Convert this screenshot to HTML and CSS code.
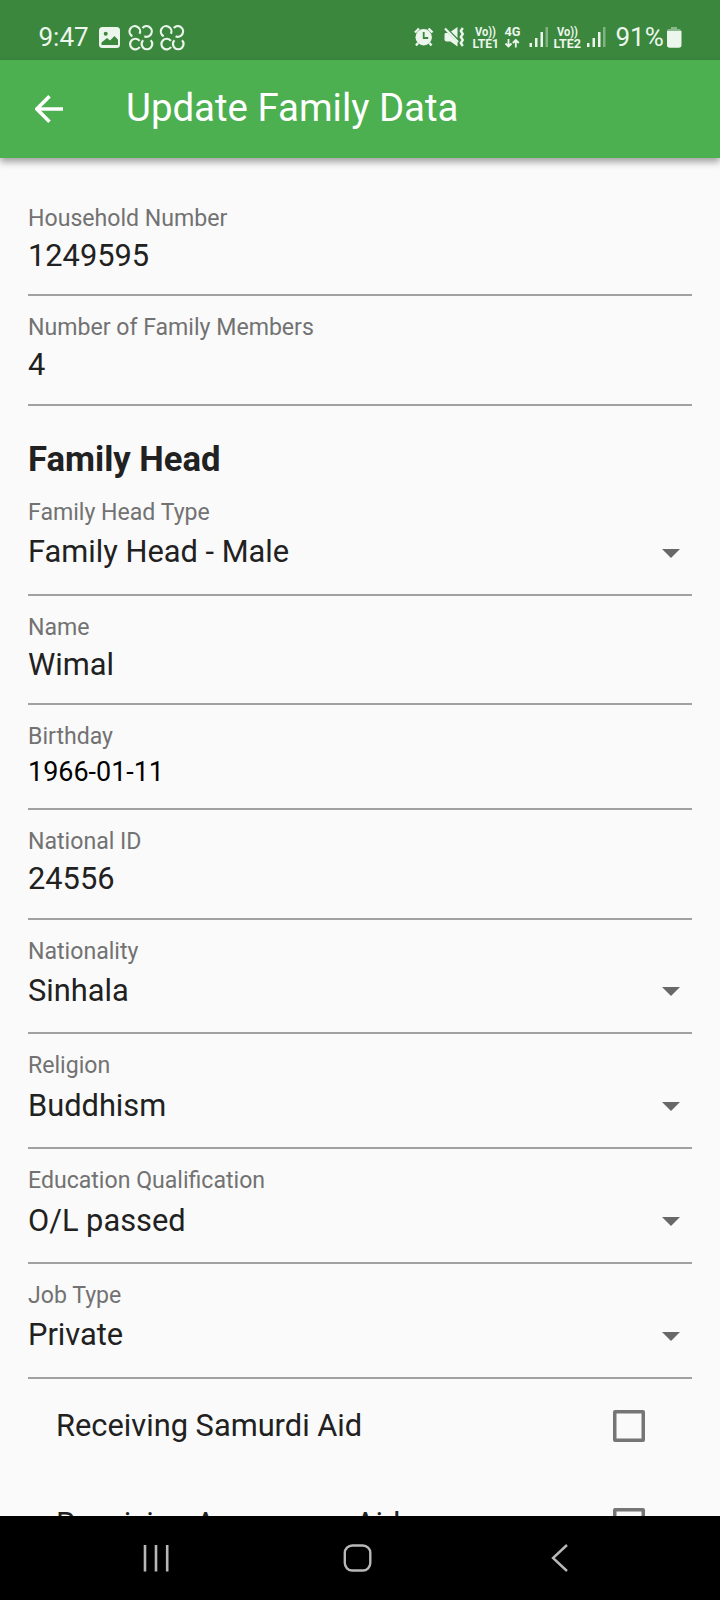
FILE: index.html
```
<!DOCTYPE html>
<html lang="en">
<head>
<meta charset="utf-8">
<title>Update Family Data</title>
<link rel="stylesheet" href="styles.css">
</head>
<body>
<div class="screen">
  <div class="status">
    <span class="clock">9:47</span>
    <svg class="notif" width="90" height="30" viewBox="96 22 90 30">
      <rect x="99" y="27" width="21" height="21" rx="3.5" fill="#ecf6ec"/>
      <circle cx="105.7" cy="33.8" r="2" fill="#3b873e"/>
      <path d="M101.500 45v-2.500l5.500-4.500 3 2.500 4.500-4.500 3.500 3.800V45z" fill="#3b873e"/>
      <g id="clover" fill="none" stroke="#ecf6ec" stroke-width="2.200">
        <path d="M132.400 36.200A5.300 5.300 0 1 1 139.600 33.800M142.500 28A5.300 5.300 0 1 1 144.300 36.300M139.600 40.800A5.300 5.300 0 1 0 139.800 47M143.200 40.200A5.300 5.300 0 1 0 150.700 40.200"/>
      </g>
      <use href="#clover" x="31.300"/>
    </svg>
    <svg class="signals" width="194" height="30" viewBox="412 22 194 30">
      <g fill="#ecf6ec">
        <circle cx="423.700" cy="37.300" r="8.200"/>
        <path d="M415 32.500l4-4M428.500 28.500l4 4M418 43l-2 2.500M429.500 43l2 2.500" stroke="#ecf6ec" stroke-width="2.400"/>
        <path d="M423.700 32v6h4.500" fill="none" stroke="#3b873e" stroke-width="1.800"/>
        <path d="M445 33h3l9.500 9.500v4l-7-5h-4a2 2 0 0 1-2-2v-5z M451 31.500l6.500-4.500v11z"/>
        <path d="M445 28.500l13 13.500" stroke="#ecf6ec" stroke-width="2.200"/>
        <path d="M462.800 28l-2 3 2 3-2 3 2 3-2 3 2 3" fill="none" stroke="#ecf6ec" stroke-width="2.400"/>
        <g class="tiny">
          <text x="475" y="36" textLength="21" lengthAdjust="spacingAndGlyphs">Vo))</text>
          <text x="472.500" y="47.500" textLength="26.500" lengthAdjust="spacingAndGlyphs">LTE1</text>
          <text x="504.500" y="36" textLength="16" lengthAdjust="spacingAndGlyphs">4G</text>
          <text x="557" y="36" textLength="21" lengthAdjust="spacingAndGlyphs">Vo))</text>
          <text x="553.500" y="47.500" textLength="27.500" lengthAdjust="spacingAndGlyphs">LTE2</text>
        </g>
        <path d="M508.500 39v7.500M505.500 43.500l3 3 3-3M515.800 47.500V40M512.800 43l3-3 3 3" fill="none" stroke="#ecf6ec" stroke-width="1.800"/>
        <g id="bars"><path d="M529.500 43h2.500v4h-2.500zM535 38h2.500v9H535zM540.500 32h2.500v15h-2.500z"/><path d="M545.500 27h2.500v20h-2.500z" opacity=".4"/></g>
        <use href="#bars" x="57.500"/>
      </g>
    </svg>
    <span class="percent">91%</span>
    <svg class="battery" width="16" height="24" viewBox="666 25 16 24">
      <path d="M667 32v-1q0-2 2-2h2v-2h6v2h2q2 0 2 2v1z" fill="#8ab98c"/>
      <path d="M667 31h14.500v14q0 2.700-2.700 2.700h-9Q667 47.700 667 45z" fill="#ecf6ec"/>
    </svg>
  </div>
  <header class="appbar">
    <svg class="back" width="28" height="28" viewBox="0 0 28 28"><path d="M28 14H2M14.500 1.300L1.800 14l12.700 12.700" fill="none" stroke="#fff" stroke-width="3.600"/></svg>
    <h1>Update Family Data</h1>
  </header>
  <main class="form">
    <div class="field"><label>Household Number</label><span class="value">1249595</span></div>
    <div class="field"><label>Number of Family Members</label><span class="value">4</span></div>
    <h2>Family Head</h2>
    <div class="field select"><label>Family Head Type</label><span class="value">Family Head - Male</span></div>
    <div class="field"><label>Name</label><span class="value">Wimal</span></div>
    <div class="field date"><label>Birthday</label><span class="value">1966-01-11</span></div>
    <div class="field"><label>National ID</label><span class="value">24556</span></div>
    <div class="field select"><label>Nationality</label><span class="value">Sinhala</span></div>
    <div class="field select"><label>Religion</label><span class="value">Buddhism</span></div>
    <div class="field select"><label>Education Qualification</label><span class="value">O/L passed</span></div>
    <div class="field select"><label>Job Type</label><span class="value">Private</span></div>
    <div class="check"><span>Receiving Samurdi Aid</span><i class="box"></i></div>
    <div class="check"><span>Receiving Aswesuma Aid</span><i class="box"></i></div>
  </main>
  <nav class="navbar">
    <svg width="720" height="84" viewBox="0 1516 720 84" fill="none" stroke="#b8b8b8">
      <path d="M145 1545v26.500M156 1545v26.500M167.200 1545v26.500" stroke-width="2.600"/>
      <rect x="344.800" y="1545.500" width="25.500" height="25" rx="7.500" stroke-width="2.400"/>
      <path d="M567 1545l-14 13 14 13" stroke-width="2.400"/>
    </svg>
  </nav>
</div>
</body>
</html>
```
FILE: styles.css
```
* { box-sizing: border-box; }
body { margin: 0; font-family: Roboto, sans-serif; background: #fafafa; color: #212121; }
.screen { width: 720px; height: 1600px; display: flex; flex-direction: column; overflow: hidden; }
.status { height: 60px; flex: none; display: flex; align-items: flex-start; background: #3b873e; color: #ecf6ec; font-size: 26px; line-height: 30px; padding: 22px 0 0 38.500px; }
.clock { width: 57.500px; }
.percent { width: 60px; padding-left: 9.500px; white-space: nowrap; }
.signals { margin-left: 226px; }
.battery { margin-top: 3px; }
.tiny { font-size: 12px; font-weight: 700; }
.appbar { height: 98px; flex: none; display: flex; align-items: center; background: #4caf50; color: #fff; padding-left: 35px; box-shadow: 0 4px 7px rgba(0,0,0,.36); z-index: 1; }
.back { margin-right: 63px; }
h1 { margin: 0; padding-bottom: 2px; font-size: 38.400px; font-weight: 400; line-height: 46px; white-space: nowrap; }
.form { flex: 1; min-height: 0; overflow: hidden; padding: 28.500px 28px 0; }
.field { height: 109.700px; padding-top: 18px; border-bottom: 2px solid #a1a1a1; display: flex; flex-direction: column; gap: 5px; position: relative; }
label { font-size: 23.100px; line-height: 28px; color: #727272; }
.value { font-size: 30.800px; line-height: 36px; }
.select { height: 114.800px; gap: 7.500px; }
.select::after { content: ""; position: absolute; right: 12.500px; bottom: 36px; border: 9px solid transparent; border-top-color: #686868; border-bottom: 0; }
.date { height: 104.500px; gap: 3px; }
.date .value { font-size: 26.950px; color: #000; }
h2 { margin: 32px 0 1px; height: 42px; font-size: 34.650px; line-height: 42px; font-weight: 700; }
.check { height: 98px; padding: 0 47px 3px 28px; display: flex; align-items: center; justify-content: space-between; font-size: 30.800px; }
.check span { padding-bottom: 1.500px; }
.box { width: 32px; height: 32px; border: 3px solid #757575; box-shadow: inset 0 0 0 .5px #757575; border-radius: 2px; }
.navbar { height: 84px; flex: none; background: #000; z-index: 1; }
.navbar svg { display: block; }
```
